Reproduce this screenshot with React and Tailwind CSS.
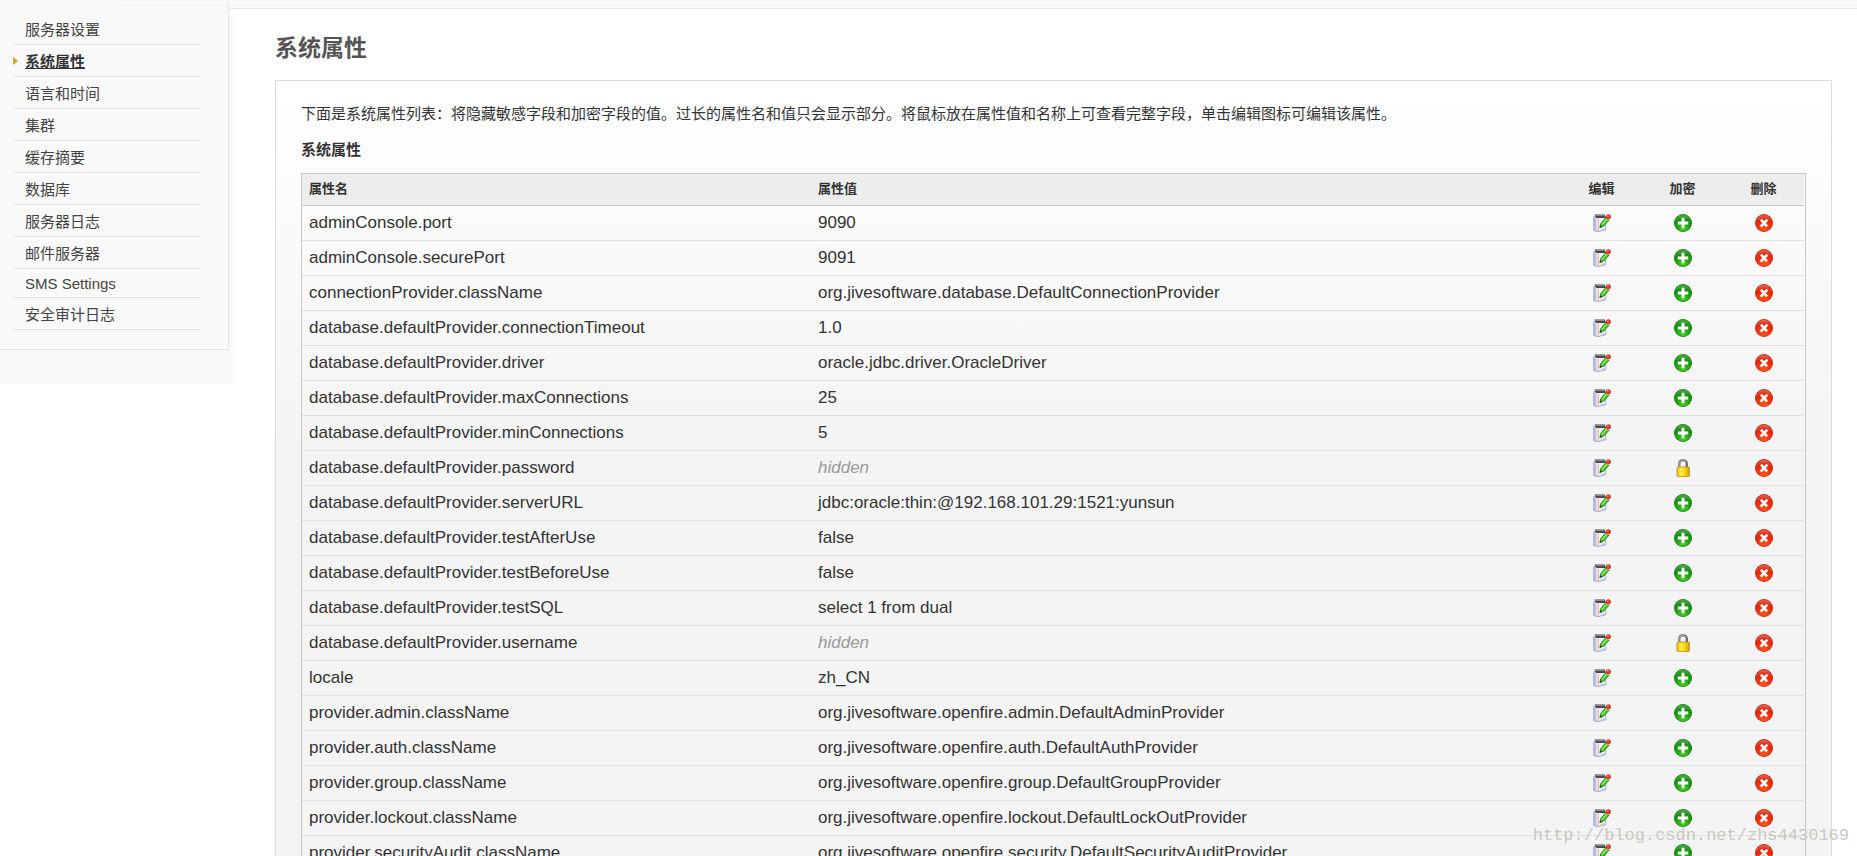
import React from 'react';

const menu = [
    '服务器设置', '系统属性', '语言和时间', '集群', '缓存摘要', '数据库',
    '服务器日志', '邮件服务器', 'SMS Settings', '安全审计日志'
];

const propiedades = [
    ['adminConsole.port', '9090'],
    ['adminConsole.securePort', '9091'],
    ['connectionProvider.className', 'org.jivesoftware.database.DefaultConnectionProvider'],
    ['database.defaultProvider.connectionTimeout', '1.0'],
    ['database.defaultProvider.driver', 'oracle.jdbc.driver.OracleDriver'],
    ['database.defaultProvider.maxConnections', '25'],
    ['database.defaultProvider.minConnections', '5'],
    ['database.defaultProvider.password', null],
    ['database.defaultProvider.serverURL', 'jdbc:oracle:thin:@192.168.101.29:1521:yunsun'],
    ['database.defaultProvider.testAfterUse', 'false'],
    ['database.defaultProvider.testBeforeUse', 'false'],
    ['database.defaultProvider.testSQL', 'select 1 from dual'],
    ['database.defaultProvider.username', null],
    ['locale', 'zh_CN'],
    ['provider.admin.className', 'org.jivesoftware.openfire.admin.DefaultAdminProvider'],
    ['provider.auth.className', 'org.jivesoftware.openfire.auth.DefaultAuthProvider'],
    ['provider.group.className', 'org.jivesoftware.openfire.group.DefaultGroupProvider'],
    ['provider.lockout.className', 'org.jivesoftware.openfire.lockout.DefaultLockOutProvider'],
    ['provider.securityAudit.className', 'org.jivesoftware.openfire.security.DefaultSecurityAuditProvider'],
];

const IconEdit = () => (
    <svg width="18" height="18" viewBox="0 0 18 18">
        <path d="M0.8 2.5 L12.3 2.2 L12.8 15.8 L5 17.6 L0.8 16.6 Z" fill="#f6f7fc" stroke="#a9aad4" strokeWidth="1" />
        <path d="M0.6 3 V16.6 L3.4 17.5 V4 Z" fill="#a3a6d4" opacity="0.7" />
        <path d="M1.6 0.6 H11.8 L12.8 4 H3 Z" fill="#4a4a4a" />
        <path d="M2.8 1.4 H11.4" stroke="#999" strokeWidth="0.9" />
        <path d="M5.2 4.5 V17" stroke="#f09c86" strokeWidth="1" />
        <path d="M7.4 15 H12 M7.8 16.4 L12 15.4" stroke="#b9c0e6" strokeWidth="0.9" />
        <path d="M6.8 13.6 L7.8 9.6 L13 3.4 L16.2 6 L10.8 12 Z" fill="#4cc828" stroke="#238018" strokeWidth="0.9" />
        <path d="M9 10.4 L14.2 4.6" stroke="#98f06c" strokeWidth="1.2" />
        <path d="M6.8 13.6 L7.4 11.4 L9 12.7 Z" fill="#222" />
        <path d="M12.9 3.7 L13.9 2.6 L16.5 4.9 L15.6 6 Z" fill="#ddd" />
        <circle cx="15.4" cy="2.7" r="2.5" fill="#dc3420" />
        <circle cx="14.9" cy="2.1" r="0.9" fill="#f28a78" />
    </svg>
);

const IconAdd = () => (
    <svg width="18" height="18" viewBox="0 0 18 18">
        <defs>
            <radialGradient id="verde" cx="0.5" cy="0.95" r="0.95">
                <stop offset="0" stopColor="#44d81c" />
                <stop offset="0.45" stopColor="#1fa60e" />
                <stop offset="0.7" stopColor="#12900c" />
                <stop offset="1" stopColor="#5cb458" />
            </radialGradient>
        </defs>
        <circle cx="9" cy="9" r="8.5" fill="url(#verde)" stroke="#0f7a0c" strokeWidth="0.9" />
        <path d="M9 3.8 V14.2 M3.8 9 H14.2" stroke="#fff" strokeWidth="3" />
    </svg>
);

const IconDelete = () => (
    <svg width="18" height="18" viewBox="0 0 18 18">
        <defs>
            <radialGradient id="rojo" cx="0.5" cy="0.95" r="0.95">
                <stop offset="0" stopColor="#ff5a1c" />
                <stop offset="0.45" stopColor="#fa3008" />
                <stop offset="0.7" stopColor="#e42408" />
                <stop offset="1" stopColor="#e87060" />
            </radialGradient>
        </defs>
        <circle cx="9" cy="9" r="8.5" fill="url(#rojo)" stroke="#c02818" strokeWidth="0.9" />
        <path d="M6 5.6 L12 12.4 M12.4 5.6 L5.6 12.6" stroke="#fff" strokeWidth="2.7" />
    </svg>
);

const IconLock = () => (
    <svg width="18" height="18" viewBox="0 0 18 18">
        <defs>
            <linearGradient id="oro" x1="0" y1="0" x2="1" y2="0">
                <stop offset="0" stopColor="#f0c010" />
                <stop offset="0.35" stopColor="#fff040" />
                <stop offset="0.65" stopColor="#f8d010" />
                <stop offset="1" stopColor="#dc9c00" />
            </linearGradient>
        </defs>
        <path d="M5.2 9 V5 C5.2 0.2 12.8 0.2 12.8 5 V9" fill="none" stroke="#707070" strokeWidth="2.4" />
        <path d="M5 8.5 V5 C5 1.2 11 0.8 12 3.4" fill="none" stroke="#c4c4c4" strokeWidth="0.9" />
        <rect x="3" y="8" width="12.4" height="9.4" rx="0.8" fill="url(#oro)" stroke="#b88a08" strokeWidth="0.8" />
    </svg>
);

const BotonIcono = ({ label, children }) => (
    <button type="button" aria-label={label} className="block mx-auto cursor-pointer">{children}</button>
);

const App = () => {
    return (
        <div className="relative h-screen overflow-hidden bg-white font-['Liberation_Sans','Noto_Sans_CJK_SC',sans-serif] text-[#333]">

            {/* BORDE SUPERIOR */}
            <div className="h-[3px] bg-[#f8f8f8] pl-[117px] pt-0.5">
                <div className="h-px bg-white" />
            </div>

            <div className="flex items-start">

                {/* MENU LATERAL */}
                <aside className="w-[235px] shrink-0 bg-[#f9f9f9] pb-[33px]">
                    <nav className="w-[229px] border-r border-b border-[#e3e3e3] pt-2.5 pl-[13px] pr-7 pb-[19px]">
                        <ul>
                            {menu.map((item) => {
                                const activo = item === '系统属性';
                                return (
                                    <li key={item} className={`flex items-center border-b border-[#e3e3e3] ${item === 'SMS Settings' ? 'h-[29px]' : 'h-8'}`}>
                                        <svg width="5" height="8" viewBox="0 0 5 8" className="mr-[7px]">
                                            {activo && <path d="M0 0 L5 4 L0 8 Z" fill="#dba617" />}
                                        </svg>
                                        <a href="#" className={`pt-0.5 text-[15px] leading-5 ${activo ? 'font-bold underline text-[#333]' : 'text-[#444]'}`}>{item}</a>
                                    </li>
                                );
                            })}
                        </ul>
                    </nav>
                </aside>

                {/* CONTENIDO */}
                <div className="relative flex-1 min-w-0 bg-[#f9f9f9] pt-[5px]">
                    {/* esquina redondeada */}
                    <svg width="7" height="7" viewBox="0 0 7 7" className="absolute -left-[7px] top-[5px]">
                        <path d="M0 7 V6 C0 2 2 0.5 6 0.5 H7 V7 Z" fill="#fff" />
                        <path d="M0.5 6 C0.5 2 2 0.5 7 0.5" fill="none" stroke="#e3e3e3" />
                    </svg>
                    <main className="border-t border-[#e3e3e3] bg-white pt-[21px] pl-10 pr-[25px]">
                        <h1 className="text-[23px] leading-9 font-bold text-[#555]">系统属性</h1>

                        <div className="mt-3.5 border border-[#dcdcdc] px-[25px] pt-[21px] pb-6 bg-[linear-gradient(to_bottom,#ffffff_0px,#f4f4f4_360px)]">
                            <p className="text-[15px] leading-6">
                                下面是系统属性列表：将隐藏敏感字段和加密字段的值。过长的属性名和值只会显示部分。将鼠标放在属性值和名称上可查看完整字段，单击编辑图标可编辑该属性。
                            </p>
                            <h2 className="mt-3 mb-[11px] text-[15px] leading-6 font-bold">系统属性</h2>

                            <div className="border border-[#c8c8c8] pr-px">
                                <table className="w-full table-fixed border-collapse text-left">
                                    <colgroup>
                                        <col className="w-[509px]" />
                                        <col />
                                        <col className="w-[81px]" />
                                        <col className="w-[81px]" />
                                        <col className="w-[81px]" />
                                    </colgroup>
                                    <thead>
                                        <tr className="h-[31px] border-b border-[#c8c8c8] bg-[#ededed] text-[13px] leading-5">
                                            <th className="px-[7px]">属性名</th>
                                            <th className="px-[7px]">属性值</th>
                                            <th className="text-center">编辑</th>
                                            <th className="text-center">加密</th>
                                            <th className="text-center">删除</th>
                                        </tr>
                                    </thead>
                                    <tbody>
                                        {propiedades.map(([nombre, valor]) => (
                                            <tr key={nombre} className="h-[35px] border-b border-[#e0e0e0] text-[17px] leading-6">
                                                <td className="px-[7px]">{nombre}</td>
                                                <td className="px-[7px]">
                                                    {valor === null ? <span className="italic text-[#999]">hidden</span> : valor}
                                                </td>
                                                <td><BotonIcono label="编辑"><IconEdit /></BotonIcono></td>
                                                <td><BotonIcono label="加密">{valor === null ? <IconLock /> : <IconAdd />}</BotonIcono></td>
                                                <td><BotonIcono label="删除"><IconDelete /></BotonIcono></td>
                                            </tr>
                                        ))}
                                    </tbody>
                                </table>
                            </div>
                        </div>
                    </main>
                </div>
            </div>

            {/* MARCA DE AGUA */}
            <div className="absolute right-2 bottom-2 font-['Liberation_Mono',monospace] text-[17px] leading-6 text-[#c8c8c0]">
                http://blog.csdn.net/zhs4430169
            </div>
        </div>
    );
};

export default App;
